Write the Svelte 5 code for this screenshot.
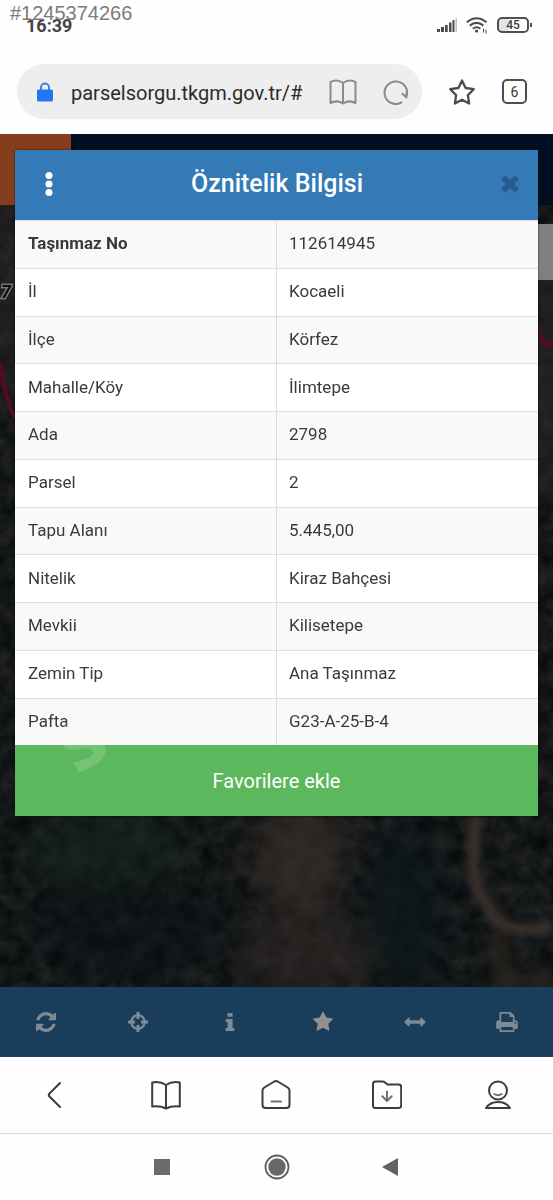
<script>
  let address = $state('parselsorgu.tkgm.gov.tr/#')

  const rows = [
    { label: 'Taşınmaz No', value: '112614945', strong: true },
    { label: 'İl', value: 'Kocaeli' },
    { label: 'İlçe', value: 'Körfez' },
    { label: 'Mahalle/Köy', value: 'İlimtepe' },
    { label: 'Ada', value: '2798' },
    { label: 'Parsel', value: '2' },
    { label: 'Tapu Alanı', value: '5.445,00' },
    { label: 'Nitelik', value: 'Kiraz Bahçesi' },
    { label: 'Mevkii', value: 'Kilisetepe' },
    { label: 'Zemin Tip', value: 'Ana Taşınmaz' },
    { label: 'Pafta', value: 'G23-A-25-B-4' }
  ]

  const tools = [
    {
      name: 'Yenile',
      box: '0 0 1536 1536',
      path: 'M1511 928q0 5-1 7-64 268-268 434.500t-478 166.500q-146 0-282.500-55t-243.500-157l-129 129q-19 19-45 19t-45-19-19-45v-448q0-26 19-45t45-19h448q26 0 45 19t19 45-19 45l-137 137q71 66 161 102t187 36q134 0 250-65t186-179q11-17 53-117 8-23 30-23h192q13 0 22.500 9.500t9.500 22.500zm25-800v448q0 26-19 45t-45 19h-448q-26 0-45-19t-19-45 19-45l138-138q-148-137-349-137-134 0-250 65t-186 179q-11 17-53 117-8 23-30 23h-199q-13 0-22.500-9.500t-9.500-22.500v-7q65-268 270-434.500t480-166.500q146 0 284 55.500t245 156.500l130-129q19-19 45-19t45 19 19 45z'
    },
    {
      name: 'Konum',
      box: '0 0 20 20',
      path: 'M8.500 0h3v2.300a8 8 0 0 1 6.200 6.200H20v3h-2.300a8 8 0 0 1-6.200 6.200V20h-3v-2.300a8 8 0 0 1-6.200-6.200H0v-3h2.300a8 8 0 0 1 6.200-6.200zM8.500 4.600a5.800 5.800 0 0 0-3.900 3.900H7v3H4.600a5.800 5.800 0 0 0 3.900 3.900V13h3v2.400a5.800 5.800 0 0 0 3.900-3.900H13v-3h2.400a5.800 5.800 0 0 0-3.900-3.900V7h-3z'
    },
    {
      name: 'Bilgi',
      box: '0 0 20 20',
      path: 'M7.500 1h5v3.800h-5zM5.700 7h6.900v9h1.800v3H5.700v-3h1.900v-6H5.700z'
    },
    {
      name: 'Favoriler',
      box: '0 64 1664 1664',
      path: 'M1664 647q0 22-26 48l-363 354 86 500q1 7 1 20 0 21-10.500 35.500t-30.500 14.500q-19 0-40-12l-449-236-449 236q-22 12-40 12-21 0-31.500-14.500t-10.500-35.500q0-6 2-20l86-500-364-354q-25-27-25-48 0-37 56-46l502-73 225-455q19-41 49-41t49 41l225 455 502 73q56 9 56 46z'
    },
    {
      name: 'Ölçüm',
      box: '0 0 22 20',
      path: 'M0 10l4.500-4.300q1-.7 1.200.5v2.100h10.600V6.200q.2-1.200 1.200-.5L22 10l-4.500 4.300q-1 .7-1.200-.5v-2.100H5.700v2.100q-.2 1.200-1.200.5z'
    },
    {
      name: 'Yazdır',
      box: '0 0 1664 1536',
      path: 'M384 1408h896v-256h-896v256zm0-640h896v-384h-160q-40 0-68-28t-28-68v-160h-640v640zm1152 64q0-26-19-45t-45-19-45 19-19 45 19 45 45 19 45-19 19-45zm128 0v416q0 13-9.500 22.500t-22.500 9.500h-224v160q0 40-28 68t-68 28h-960q-40 0-68-28t-28-68v-160h-224q-13 0-22.500-9.500t-9.500-22.500v-416q0-79 56.500-135.500t135.500-56.500h64v-544q0-40 28-68t68-28h672q40 0 88 20t76 48l152 152q28 28 48 76t20 88v256h64q79 0 135.500 56.500t56.500 135.500z'
    }
  ]
</script>

<div class="screen">
  <header class="status">
    <span class="listing">#1245374266</span>
    <span class="clock">16:39</span>
    <div class="indicators">
      <svg width="20" height="14" viewBox="0 0 20 14">
        <path d="M0 11h3v3H0zM4 9h3v5H4zM8 7h2.700v7H8zM12 4.500h2.500v9.500H12zM15.500 2h2v12h-2z" fill="#4b4b4b" />
        <path d="M18.500 0h1.500v14h-1.500z" fill="#c4c4c4" />
      </svg>
      <svg width="22" height="17" viewBox="0 0 22 17" fill="none" stroke="#4b4b4b" stroke-width="2">
        <path d="M.8 5.300Q10.500-2.800 20.600 5.300M3.800 8.600q6.700-5.400 13.600 0M6.800 11.700q3.800-2.900 7.600 0" />
        <circle cx="10.600" cy="14" r="1.600" fill="#4b4b4b" stroke="none" />
        <path d="M17.500 11.500v4M20 12.500v4" stroke-width="1" />
      </svg>
      <span class="battery">45</span>
    </div>
  </header>

  <div class="browser">
    <form class="pill" onsubmit={(e) => e.preventDefault()}>
      <svg width="16" height="20" viewBox="0 0 16 20">
        <path d="M4 9V5.500a4 4 0 0 1 8 0V9" fill="none" stroke="#3f7ee8" stroke-width="2" />
        <rect y="7.500" width="16" height="12" rx="1.500" fill="#2277f3" />
      </svg>
      <input type="text" aria-label="Adres" bind:value={address} />
      <button type="button" aria-label="Okuma modu">
        <svg width="28" height="26" viewBox="0 0 28 26" fill="none" stroke="#8b8b8b" stroke-width="2" stroke-linejoin="round">
          <path d="M14 4Q8-.5 1.500 3v21Q8 20.500 14 24.500 20 20.500 26.500 24V3Q20-.5 14 4zV24" />
        </svg>
      </button>
      <button type="button" class="reload" aria-label="Sayfayı yenile">
        <svg width="26" height="26" viewBox="0 0 26 26" fill="none" stroke="#8b8b8b" stroke-width="2">
          <path d="M19 23.200A11.300 11.300 0 1 1 23.500 17.500M23.800 12.500l-.6 5.800-4.400-4" />
        </svg>
      </button>
    </form>
    <button aria-label="Yer imi ekle">
      <svg width="28" height="28" viewBox="0 0 28 28" fill="none" stroke="#4d4d4d" stroke-width="2.300" stroke-linejoin="round">
        <path d="M14 2.500l3.600 7.500 8.200 1.200-5.900 5.900 1.200 8.400-7.100-3.800-7.100 3.800 1.200-8.400-5.900-5.900 8.200-1.200z" />
      </svg>
    </button>
    <button class="tabs" aria-label="Sekmeler">6</button>
  </div>

  <main class="map">
    <svg class="terrain" aria-hidden="true">
      <defs>
        <filter id="grain" x="0" y="0" width="100%" height="100%" color-interpolation-filters="sRGB">
          <feTurbulence type="fractalNoise" baseFrequency="0.06" numOctaves="4" seed="7" />
          <feColorMatrix values="0.16 0 0 0 0  0.15 0 0 0 0.015  0.15 0 0 0 0.02  0 0 0 0 1" />
        </filter>
        <filter id="soft" x="-50%" y="-50%" width="200%" height="200%" color-interpolation-filters="sRGB">
          <feGaussianBlur stdDeviation="14" />
        </filter>
        <filter id="edge" x="-20%" y="-20%" width="140%" height="140%" color-interpolation-filters="sRGB">
          <feGaussianBlur stdDeviation="3" />
        </filter>
      </defs>
      <rect width="100%" height="100%" fill="#15191a" />
      <rect width="100%" height="100%" filter="url(#grain)" />
      <g filter="url(#soft)">
        <ellipse cx="300" cy="725" rx="46" ry="55" fill="#3a302b" opacity="0.7" />
        <ellipse cx="310" cy="820" rx="75" ry="40" fill="#312926" opacity="0.6" />
        <ellipse cx="105" cy="715" rx="75" ry="35" fill="#12281c" opacity="0.6" />
        <ellipse cx="405" cy="780" rx="38" ry="90" fill="#0b1719" opacity="0.7" />
        <ellipse cx="130" cy="795" rx="100" ry="45" fill="#0a1113" opacity="0.5" />
        <rect y="70" width="15" height="200" fill="#362b29" />
        <rect x="535" y="130" width="20" height="230" fill="#302a26" />
      </g>
      <g fill="none" filter="url(#edge)">
        <path d="M477 682q-12 60 10 90 14 32 66 20" stroke="#3e342f" stroke-width="13" opacity="0.8" />
        <path d="M495 800q10 20 5 50h53" stroke="#2c271e" stroke-width="22" opacity="0.6" />
      </g>
      <path d="M0 230q5 35 15 54M538 200l9 12 7-4" fill="none" stroke="#570b20" stroke-width="4" />
      <text x="1" y="164">7</text>
    </svg>
    <div class="site-bar"><span></span></div>
    <div class="search-edge"></div>

    <section class="dialog">
      <div class="dialog-head">
        <button aria-label="Menü">
          <svg width="8" height="26" viewBox="0 0 8 26" fill="#fff">
            <circle cx="4" cy="4.500" r="3.500" />
            <circle cx="4" cy="13" r="3.500" />
            <circle cx="4" cy="21.500" r="3.500" />
          </svg>
        </button>
        <h1>Öznitelik Bilgisi</h1>
        <button aria-label="Kapat">
          <svg width="18" height="18" viewBox="0 0 18 18" stroke="#285b8b" stroke-width="5.600">
            <path d="M2 2.500l14 13M16 2.500l-14 13" />
          </svg>
        </button>
      </div>
      <table>
        <tbody>
          {#each rows as row}
            <tr>
              <th scope="row" class:strong={row.strong}>{row.label}</th>
              <td>{row.value}</td>
            </tr>
          {/each}
        </tbody>
      </table>
      <button class="favorite">
        <span class="watermark" aria-hidden="true">s</span>
        Favorilere ekle
      </button>
    </section>
  </main>

  <nav class="toolbar">
    {#each tools as tool}
      <button aria-label={tool.name}>
        <svg width="22" height="20" viewBox={tool.box} fill-rule="evenodd">
          <path d={tool.path} />
        </svg>
      </button>
    {/each}
  </nav>

  <nav class="bottom">
    <button aria-label="Geri">
      <svg viewBox="0 0 30 30"><path d="M20 3L9.500 13.500q-1.500 1.500 0 3L20 27" /></svg>
    </button>
    <button aria-label="Kitaplık">
      <svg viewBox="0 0 30 30"><path d="M15 5Q9 1 1.200 2.500v24Q9 25.500 15 28.500 21 25.500 28.800 26.500v-24Q21 1 15 5zV28.500" /></svg>
    </button>
    <button aria-label="Ana sayfa">
      <svg viewBox="0 0 30 30">
        <path d="M13.300 1.500q1.700-.8 3.400 0l10 6q1.800 1.100 1.800 3V25q0 3-3 3h-21q-3 0-3-3V10.500q0-1.900 1.800-3z" />
        <path class="thin" d="M10.500 21.500h9.500" />
      </svg>
    </button>
    <button aria-label="İndirilenler">
      <svg viewBox="0 0 30 30">
        <path d="M3.500 1.500h7.200q1.300 0 2.300 1l2.500 2h11.200q2.500 0 2.500 2.500v18.500q0 2.500-2.500 2.500H3.500Q1 28 1 25.500V4q0-2.500 2.500-2.500z" />
        <path class="thin" d="M15 11.500v9.500M10.300 16.300l4.700 4.700 4.700-4.700" />
      </svg>
    </button>
    <button aria-label="Profil">
      <svg viewBox="0 0 30 30">
        <circle cx="15" cy="10.500" r="9" />
        <path d="M3 28q4-6 12-6t12 6z" />
        <path class="thin" d="M11.300 14q3.700 2.500 7.400 0" />
      </svg>
    </button>
  </nav>

  <nav class="system">
    <button aria-label="Son uygulamalar">
      <svg width="26" height="26" viewBox="0 0 26 26"><path d="M4 5h16v16H4z" fill="#6b6b6b" /></svg>
    </button>
    <button aria-label="Ana ekran">
      <svg width="26" height="26" viewBox="0 0 26 26">
        <circle cx="13" cy="13" r="11.500" fill="none" stroke="#5b5b5b" stroke-width="1.800" />
        <circle cx="13" cy="13" r="8.700" fill="#686868" />
      </svg>
    </button>
    <button aria-label="Geri git">
      <svg width="26" height="26" viewBox="0 0 26 26"><path d="M4 13l16-9v18z" fill="#626262" /></svg>
    </button>
  </nav>
</div>

<style>
  :global(body) {
    margin: 0;
    background: #fff;
  }

  .screen {
    min-height: 100vh;
    display: flex;
    flex-direction: column;
    background: #fefefe;
    font-family: Roboto, 'Noto Sans', sans-serif;
    color: #3a3a3a;
  }

  button {
    border: 0;
    padding: 0;
    background: none;
    font: inherit;
    color: inherit;
    display: flex;
    align-items: center;
    justify-content: center;
    cursor: pointer;
  }

  svg {
    flex: none;
  }

  .status {
    position: relative;
    height: 50px;
    padding: 0 24px 0 26px;
    display: flex;
    align-items: center;
    justify-content: space-between;
  }

  .clock {
    font-size: 18px;
    font-weight: 700;
    color: #444;
  }

  .listing {
    position: absolute;
    top: 1px;
    left: 10px;
    font-family: 'Liberation Sans', Arial, sans-serif;
    font-size: 20px;
    line-height: 24px;
    color: #7c7c7c;
  }

  .indicators {
    display: flex;
    align-items: center;
    gap: 9px;
  }

  .battery {
    position: relative;
    width: 28px;
    height: 12px;
    border: 2px solid #4f4f4f;
    border-radius: 5px;
    background: linear-gradient(90deg, #e4e4e4 35%, #fff 35%);
    font-size: 12px;
    font-weight: 500;
    line-height: 12px;
    text-align: center;
  }

  .battery::after {
    content: '';
    position: absolute;
    top: 4px;
    right: -5px;
    width: 2px;
    height: 4px;
    background: #4f4f4f;
  }

  .browser {
    display: flex;
    align-items: center;
    gap: 26px;
    padding: 14px 26px 15px 17px;
  }

  .pill {
    flex: 1;
    min-width: 0;
    height: 55px;
    box-sizing: border-box;
    padding: 0 13px 0 20px;
    display: flex;
    align-items: center;
    border-radius: 28px;
    background: #eee;
  }

  .pill input {
    flex: 1;
    min-width: 0;
    margin-left: 18px;
    padding: 2px 0 0;
    border: 0;
    outline: 0;
    background: none;
    font: inherit;
    font-size: 20px;
    line-height: 28px;
    color: #2b2b2b;
  }

  .reload {
    margin-left: 26px;
  }

  .tabs {
    width: 25px;
    height: 25px;
    box-sizing: border-box;
    border: 2px solid #4d4d4d;
    border-radius: 5px;
    font-size: 14px;
  }

  .map {
    position: relative;
    flex: 1;
    padding: 16px 15px;
    background: #15191a;
    overflow: hidden;
  }

  .terrain {
    position: absolute;
    inset: 0;
    width: 100%;
    height: 100%;
  }

  .terrain text {
    font-size: 18px;
    font-weight: 700;
    font-style: italic;
    fill: #0c0c0c;
    stroke: #777;
    stroke-width: 3px;
    paint-order: stroke;
  }

  .site-bar {
    position: absolute;
    top: 0;
    left: 0;
    right: 0;
    height: 71px;
    background: #000f1f;
  }

  .site-bar span {
    display: block;
    width: 71px;
    height: 100%;
    background: #843d1d;
  }

  .search-edge {
    position: absolute;
    top: 90px;
    right: 0;
    width: 40px;
    height: 56px;
    background: #7f7f7f;
  }

  .dialog {
    position: relative;
    background: #fff;
    box-shadow: 0 0 2px rgba(0, 0, 0, 0.6);
  }

  .dialog-head {
    height: 70px;
    box-sizing: border-box;
    padding: 0 19px 2px 30px;
    display: flex;
    align-items: center;
    justify-content: space-between;
    background: #337ab7;
    color: #fff;
  }

  .dialog-head h1 {
    margin: 0;
    font-size: 25px;
    font-weight: 500;
    line-height: 32px;
  }

  table {
    width: 100%;
    height: 525px;
    border-collapse: collapse;
    table-layout: fixed;
    font-size: 17px;
    line-height: 24px;
  }

  th,
  td {
    padding: 0 12px 2px;
    border-top: 1px solid #ddd;
    text-align: left;
    font-weight: 400;
  }

  th {
    padding-left: 13px;
  }

  td {
    border-left: 1px solid #ddd;
  }

  tr:nth-child(odd) {
    background: #f9f9f9;
  }

  .strong {
    font-weight: 700;
  }

  .favorite {
    position: relative;
    width: 100%;
    height: 71px;
    background: #5cb85c;
    color: #fff;
    font-size: 20px;
  }

  .watermark {
    position: absolute;
    top: -54px;
    left: 40px;
    font-family: 'Open Sans', sans-serif;
    font-size: 88px;
    font-weight: 700;
    line-height: 88px;
    color: rgba(255, 255, 255, 0.16);
    transform: rotate(-32deg);
  }

  .toolbar {
    height: 70px;
    display: flex;
    background: #1a3d5c;
  }

  .toolbar svg {
    fill: #7e8a95;
  }

  .toolbar button:nth-child(4) svg {
    fill: #948f8f;
  }

  .toolbar button,
  .bottom button {
    flex: 1;
  }

  .bottom {
    height: 76px;
    display: flex;
    border-bottom: 1px solid #ddd;
  }

  .bottom svg {
    width: 30px;
    height: 30px;
    fill: none;
    stroke: #3c3c3c;
    stroke-width: 2;
    stroke-linecap: round;
    stroke-linejoin: round;
  }

  .bottom .thin {
    stroke: #707070;
    stroke-width: 2;
  }

  .system {
    height: 66px;
    display: flex;
    align-items: center;
    justify-content: center;
    gap: 88px;
  }
</style>
